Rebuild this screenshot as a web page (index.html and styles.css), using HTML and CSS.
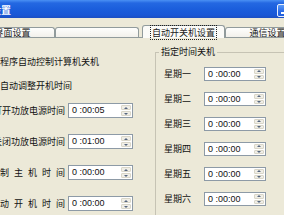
FILE: index.html
```html
<!DOCTYPE html>
<html>
<head>
<meta charset="utf-8">
<link rel="stylesheet" href="styles.css">
</head>
<body>
<div class="window">
  <div class="titlebar">
    <span class="title">设置</span>
    <span class="minbtn"><span class="minbar"></span></span>
  </div>
  <div class="tabs">
    <div class="tab t1">界面设置</div>
    <div class="tab t2"></div>
    <div class="tab sel"><span class="focus">自动开关机设置</span></div>
    <div class="tab t4">通信设置</div>
  </div>
  <div class="panel">
    <div class="left">
      <div class="line l1">程序自动控制计算机关机</div>
      <div class="line l2">自动调整开机时间</div>
      <div class="row r1">
        <span class="lab">打开功放电源时间</span>
        <div class="spin"><span class="val">0 :00:05</span><span class="btns"><span class="up"></span><span class="dn"></span></span></div>
      </div>
      <div class="row">
        <span class="lab">关闭功放电源时间</span>
        <div class="spin"><span class="val">0 :01:00</span><span class="btns"><span class="up"></span><span class="dn"></span></span></div>
      </div>
      <div class="row">
        <span class="lab spaced">控 制 主 机 时 间</span>
        <div class="spin"><span class="val">0 :00:00</span><span class="btns"><span class="up"></span><span class="dn"></span></span></div>
      </div>
      <div class="row">
        <span class="lab spaced">启 动 开 机 时 间</span>
        <div class="spin"><span class="val">0 :00:00</span><span class="btns"><span class="up"></span><span class="dn"></span></span></div>
      </div>
    </div>
    <fieldset class="group">
      <legend>指定时间关机</legend>
      <div class="wrow"><span class="wlab">星期一</span><div class="spin wspin"><span class="val">0 :00:00</span><span class="btns"><span class="up"></span><span class="dn"></span></span></div></div>
      <div class="wrow"><span class="wlab">星期二</span><div class="spin wspin"><span class="val">0 :00:00</span><span class="btns"><span class="up"></span><span class="dn"></span></span></div></div>
      <div class="wrow"><span class="wlab">星期三</span><div class="spin wspin"><span class="val">0 :00:00</span><span class="btns"><span class="up"></span><span class="dn"></span></span></div></div>
      <div class="wrow"><span class="wlab">星期四</span><div class="spin wspin"><span class="val">0 :00:00</span><span class="btns"><span class="up"></span><span class="dn"></span></span></div></div>
      <div class="wrow"><span class="wlab">星期五</span><div class="spin wspin"><span class="val">0 :00:00</span><span class="btns"><span class="up"></span><span class="dn"></span></span></div></div>
      <div class="wrow"><span class="wlab">星期六</span><div class="spin wspin"><span class="val">0 :00:00</span><span class="btns"><span class="up"></span><span class="dn"></span></span></div></div>
    </fieldset>
  </div>
</div>
</body>
</html>
```

FILE: styles.css
```css
html, body {
  margin: 0;
  padding: 0;
}
body {
  width: 284px;
  height: 215px;
  overflow: hidden;
  background: #ece9d8;
  font-family: "Noto Sans CJK SC", "Noto Sans", sans-serif;
  font-size: 9px;
  color: #111;
}
.window {
  width: 284px;
  height: 215px;
  overflow: hidden;
}
.titlebar {
  height: 18px;
  display: flex;
  justify-content: space-between;
  align-items: center;
  background: linear-gradient(to bottom, #4a90f4 0px, #2468e2 3px, #1b5edc 9px, #1957d6 15px, #1c4fc2 18px);
}
.title {
  color: #fff;
  font-weight: bold;
  font-size: 10px;
  line-height: 12px;
  margin-left: -9px;
  margin-top: 2px;
}
.minbtn {
  align-self: flex-start;
  margin-top: 4px;
  margin-right: -8px;
  width: 15px;
  height: 13px;
  box-sizing: border-box;
  border: 1px solid #e8eefc;
  border-radius: 2px;
  background: linear-gradient(to bottom, #5d9cf8, #2a6ae6 60%, #2260dc);
  display: flex;
  align-items: flex-end;
  padding: 0 0 2px 3px;
}
.minbar {
  width: 6px;
  height: 2px;
  background: #fff;
}
.tabs {
  display: flex;
  align-items: flex-end;
  height: 13px;
  box-sizing: border-box;
  border-bottom: 1px solid #919b9c;
  margin-top: 7px;
  margin-left: -30px;
}
.tab {
  flex: none;
  box-sizing: border-box;
  height: 10px;
  border: 1px solid #919b9c;
  border-bottom: none;
  border-radius: 3px 3px 0 0;
  background: linear-gradient(to bottom, #fefefd, #f2f1eb);
  text-align: center;
  line-height: 9px;
  white-space: nowrap;
  color: #222;
}
.t1 { width: 85px; }
.t2 { width: 84px; }
.t4 { width: 85px; }
.sel {
  width: 83px;
  height: 13px;
  margin-left: 3px;
  margin-bottom: -1px;
  background: #fbfbf8;
  padding-top: 3px;
  line-height: 8px;
}
.focus {
  outline: 1px dotted #222;
  outline-offset: 0;
  padding: 0 1px;
}
.panel {
  display: flex;
}
.left {
  width: 155px;
  flex: none;
  display: flex;
  flex-direction: column;
}
.line {
  line-height: 12px;
  white-space: nowrap;
}
.l1 { margin-top: 18px; }
.l2 { margin-top: 12px; }
.row {
  display: flex;
  align-items: center;
  height: 15px;
}
.r1 { margin-top: 11px; }
.row + .row { margin-top: 16px; }
.lab {
  width: 68px;
  flex: none;
  box-sizing: border-box;
  padding-right: 3px;
  display: flex;
  justify-content: flex-end;
  white-space: pre;
  line-height: 12px;
}
.spaced { word-spacing: 3px; }
.spin {
  flex: none;
  display: flex;
  width: 65px;
  height: 15px;
  box-sizing: border-box;
  border: 1px solid #8d9aa6;
  background: #fff;
}
.val {
  flex: 1;
  font-family: "Liberation Sans", Arial, sans-serif;
  font-size: 9px;
  line-height: 13px;
  padding-left: 3px;
  white-space: pre;
}
.btns {
  width: 10px;
  display: flex;
  flex-direction: column;
  margin: 1px 1px 1px 0;
  gap: 1px;
}
.up, .dn {
  flex: 1;
  display: flex;
  align-items: center;
  justify-content: center;
  background: #f0eee6;
  border: 1px solid #d9d6c8;
  border-radius: 1px;
}
.up::after {
  content: "";
  border-left: 2px solid transparent;
  border-right: 2px solid transparent;
  border-bottom: 2px solid #55657f;
}
.dn::after {
  content: "";
  border-left: 2px solid transparent;
  border-right: 2px solid transparent;
  border-top: 2px solid #55657f;
}
.group {
  flex: 1;
  min-width: 0;
  margin: 8px -20px 0 0;
  padding: 9px 0 0 0;
  border: 1px solid #c6c3b4;
  height: 220px;
}
.group legend {
  margin-left: 3px;
  padding: 0 2px;
  line-height: 12px;
  font-size: 9px;
}
.wrow {
  display: flex;
  align-items: center;
  height: 14px;
  margin-bottom: 11px;
  padding-left: 8px;
}
.wlab {
  width: 40px;
  flex: none;
  line-height: 12px;
}
.wspin {
  width: 62px;
  height: 14px;
}
.wspin .val { line-height: 12px; }
```
